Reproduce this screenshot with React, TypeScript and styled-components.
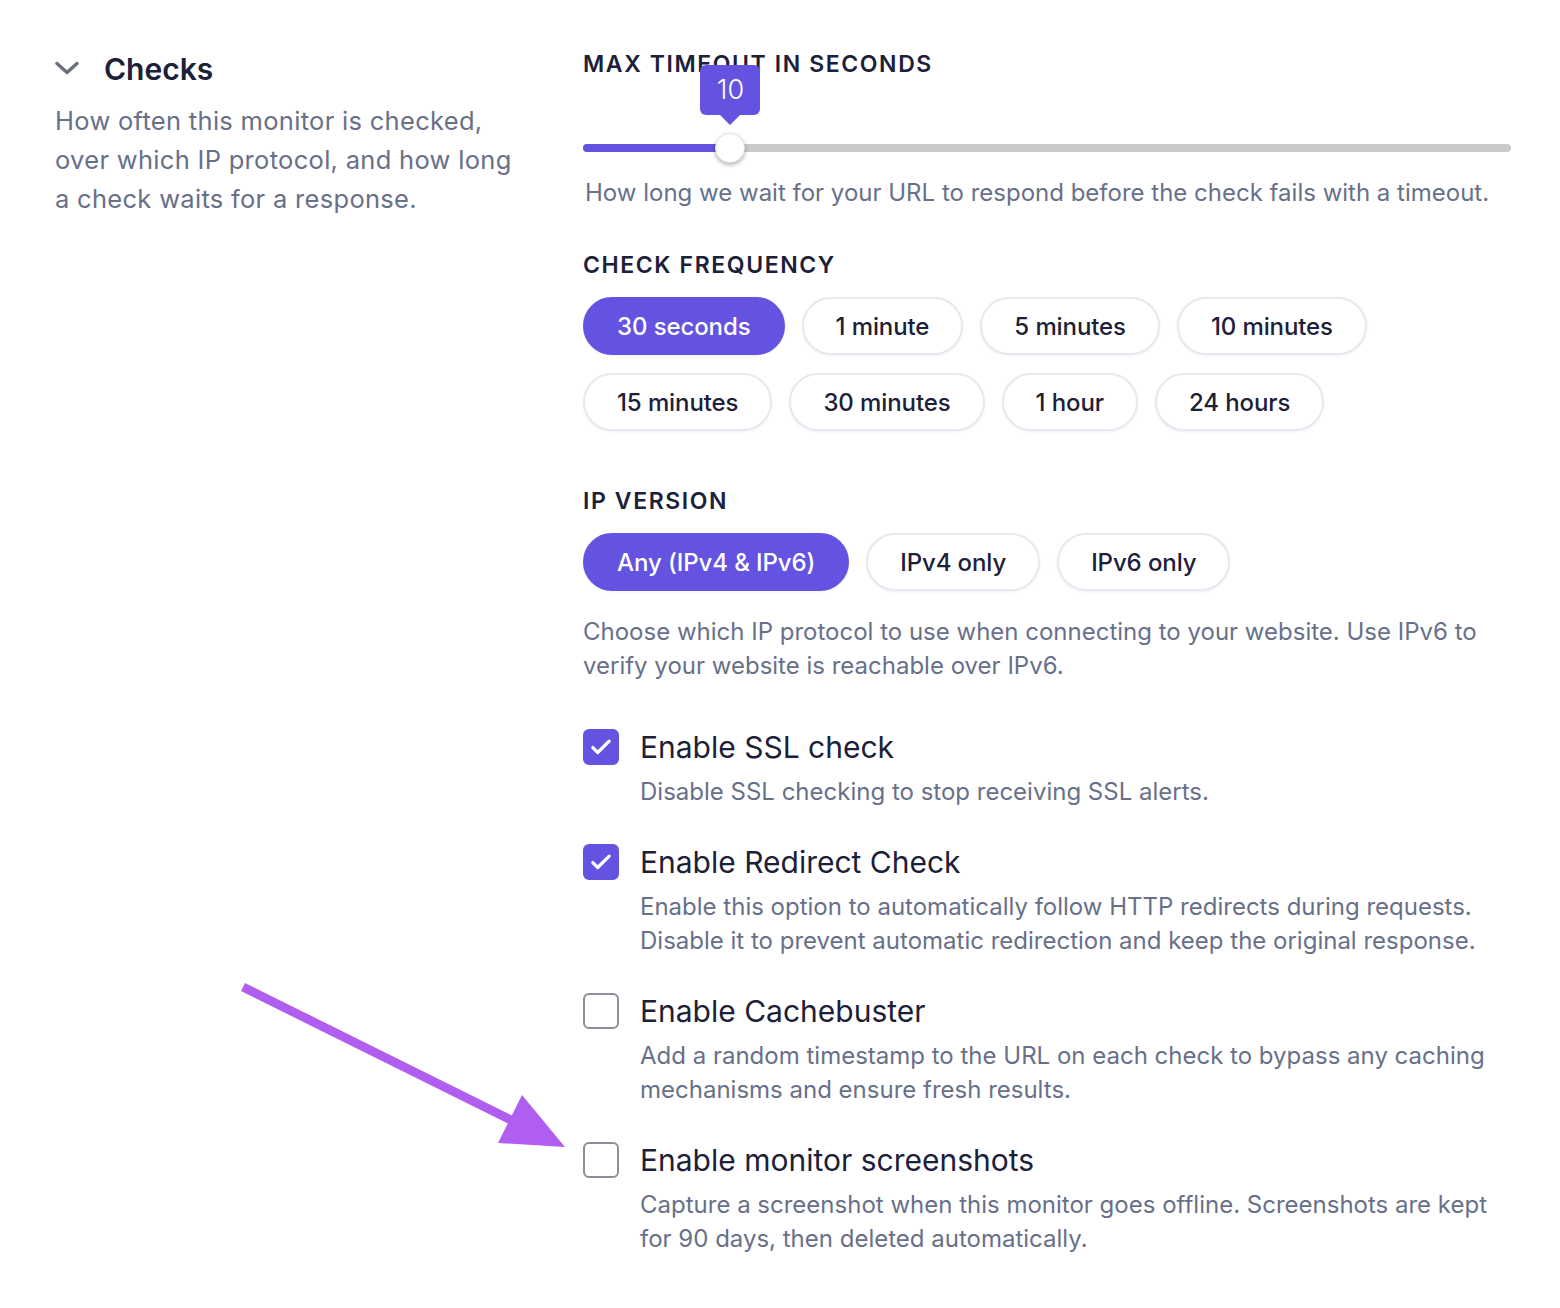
import styled, { createGlobalStyle } from 'styled-components';

const GlobalStyle = createGlobalStyle`
  body {
    margin: 0;
    background: #ffffff;
    font-family: Inter, "Noto Sans", sans-serif;
    color: #1c2039;
  }
  * { box-sizing: border-box; }
`;

const PURPLE = '#6453e0';

const FREQUENCIES = [
  ['30 seconds', '1 minute', '5 minutes', '10 minutes'],
  ['15 minutes', '30 minutes', '1 hour', '24 hours'],
];

const IP_VERSIONS = ['Any (IPv4 & IPv6)', 'IPv4 only', 'IPv6 only'];

const OPTIONS = [
  {
    title: 'Enable SSL check',
    text: ['Disable SSL checking to stop receiving SSL alerts.'],
    checked: true,
  },
  {
    title: 'Enable Redirect Check',
    text: [
      'Enable this option to automatically follow HTTP redirects during requests.',
      'Disable it to prevent automatic redirection and keep the original response.',
    ],
    checked: true,
  },
  {
    title: 'Enable Cachebuster',
    text: [
      'Add a random timestamp to the URL on each check to bypass any caching mechanisms and ensure fresh results.',
    ],
    checked: false,
  },
  {
    title: 'Enable monitor screenshots',
    text: [
      'Capture a screenshot when this monitor goes offline. Screenshots are kept for 90 days, then deleted automatically.',
    ],
    checked: false,
  },
];

function App() {
  const timeout = 10;
  const min = 1;
  const max = 62;
  const pct = (timeout - min) / (max - min);
  const thumbLeft = `calc(15px + ${pct} * (100% - 30px))`;

  return (
    <Page>
      <GlobalStyle />
      <Sidebar>
        <SectionHead>
          <svg width="24" height="24" viewBox="0 0 24 24" fill="none">
            <path
              d="M2 6.5l10 9 10-9"
              stroke="#6b6f78"
              strokeWidth="3.4"
              strokeLinecap="round"
              strokeLinejoin="round"
            />
          </svg>
          <SectionTitle>Checks</SectionTitle>
        </SectionHead>
        <SectionText>
          How often this monitor is checked, over which IP protocol, and how
          long a check waits for a response.
        </SectionText>
      </Sidebar>

      <Form>
        <Label>Max timeout in seconds</Label>
        <Slider>
          <Track />
          <Fill style={{ width: thumbLeft }} />
          <Thumb style={{ left: thumbLeft }}>
            <Bubble>{timeout}</Bubble>
          </Thumb>
        </Slider>
        <Help $top={13} $indent={2}>
          How long we wait for your URL to respond before the check fails with
          a timeout.
        </Help>

        <Label $top={40}>Check frequency</Label>
        <PillGroup>
          {FREQUENCIES.map((row, i) => (
            <PillRow key={i}>
              {row.map((f) => (
                <Pill key={f} $active={f === '30 seconds'}>
                  {f}
                </Pill>
              ))}
            </PillRow>
          ))}
        </PillGroup>

        <Label $top={55}>IP version</Label>
        <PillGroup>
          <PillRow>
            {IP_VERSIONS.map((v) => (
              <Pill key={v} $active={v === IP_VERSIONS[0]}>
                {v}
              </Pill>
            ))}
          </PillRow>
        </PillGroup>
        <Help $top={24}>
          Choose which IP protocol to use when connecting to your website. Use
          IPv6 to verify your website is reachable over IPv6.
        </Help>

        <Options>
          {OPTIONS.map((o) => (
            <Option key={o.title}>
              <Box $checked={o.checked}>
                {o.checked && (
                  <svg width="28" height="28" viewBox="0 0 24 24" fill="none">
                    <path
                      d="M5 12.5l4.2 4.2L19 7"
                      stroke="#fff"
                      strokeWidth="2.8"
                      strokeLinecap="round"
                      strokeLinejoin="round"
                    />
                  </svg>
                )}
              </Box>
              <OptionBody>
                <OptionTitle>{o.title}</OptionTitle>
                {o.text.map((t) => (
                  <OptionText key={t}>{t}</OptionText>
                ))}
              </OptionBody>
            </Option>
          ))}
        </Options>
      </Form>

      <Pointer width="340" height="180" viewBox="0 0 340 180">
        <line
          x1="3"
          y1="3"
          x2="285"
          y2="143"
          stroke="#b05ef0"
          strokeWidth="9"
        />
        <polygon points="325,163 258,159 282,111" fill="#b05ef0" />
      </Pointer>
    </Page>
  );
}
export default App;

const Page = styled.div`
  position: relative;
  display: flex;
  padding: 49px 0 60px 55px;
  min-height: 1308px;
`;

const Sidebar = styled.aside`
  width: 528px;
  flex-shrink: 0;
`;

const SectionHead = styled.div`
  display: flex;
  align-items: center;
  gap: 25px;
  height: 40px;
`;

const SectionTitle = styled.h2`
  margin: 0;
  font-size: 30px;
  font-weight: 600;
  line-height: 40px;
  color: #1c2039;
`;

const SectionText = styled.p`
  margin: 12px 0 0;
  max-width: 462px;
  font-size: 25.5px;
  line-height: 39px;
  letter-spacing: 0.3px;
  color: #687089;
`;

const Form = styled.main`
  width: 928px;
  display: flex;
  flex-direction: column;
`;

const Label = styled.div<{ $top?: number }>`
  margin-top: ${(p) => p.$top ?? 0}px;
  font-size: 23px;
  font-weight: 600;
  line-height: 30px;
  letter-spacing: 1.6px;
  text-transform: uppercase;
  color: #1c2039;
`;

const Slider = styled.div`
  position: relative;
  height: 30px;
  margin-top: 54px;
  display: flex;
  align-items: center;
`;

const Track = styled.div`
  width: 100%;
  height: 8px;
  border-radius: 4px;
  background: #cacaca;
`;

const Fill = styled.div`
  position: absolute;
  left: 0;
  top: 11px;
  height: 8px;
  border-radius: 4px 0 0 4px;
  background: ${PURPLE};
`;

const Thumb = styled.div`
  position: absolute;
  top: 0;
  width: 30px;
  height: 30px;
  margin-left: -15px;
  border-radius: 50%;
  background: #ffffff;
  border: 1px solid #e6e6e6;
  box-shadow: 0 2px 4px rgba(0, 0, 0, 0.3);
`;

const Bubble = styled.div`
  position: absolute;
  left: 50%;
  bottom: 47px;
  transform: translateX(-50%);
  width: 60px;
  height: 50px;
  border-radius: 6px;
  background: ${PURPLE};
  color: #ffffff;
  font-size: 27px;
  font-weight: 300;
  line-height: 50px;
  text-align: center;

  &::after {
    content: '';
    position: absolute;
    left: 50%;
    top: 100%;
    margin-left: -10px;
    border: 10px solid transparent;
    border-bottom: 0;
    border-top-color: ${PURPLE};
  }
`;

const Help = styled.p<{ $top?: number; $indent?: number }>`
  margin: ${(p) => p.$top ?? 0}px 0 0 ${(p) => p.$indent ?? 0}px;
  font-size: 24px;
  line-height: 34px;
  color: #687089;
`;

const PillGroup = styled.div`
  margin-top: 17px;
  display: flex;
  flex-direction: column;
  gap: 18px;
`;

const PillRow = styled.div`
  display: flex;
  gap: 17px;
`;

const Pill = styled.button<{ $active?: boolean }>`
  height: 58px;
  padding: 0 32px;
  border-radius: 29px;
  font-family: inherit;
  font-size: 24px;
  font-weight: 500;
  letter-spacing: -0.1px;
  cursor: pointer;
  border: 2px solid ${(p) => (p.$active ? PURPLE : '#e6e9ef')};
  background: ${(p) => (p.$active ? PURPLE : '#ffffff')};
  color: ${(p) => (p.$active ? '#ffffff' : '#1c2039')};
  box-shadow: 0 1px 3px rgba(20, 30, 60, 0.06);
`;

const Options = styled.div`
  margin-top: 44px;
  display: flex;
  flex-direction: column;
  gap: 33px;
`;

const Option = styled.label`
  display: flex;
  align-items: flex-start;
  gap: 21px;
`;

const Box = styled.span<{ $checked?: boolean }>`
  flex-shrink: 0;
  width: 36px;
  height: 36px;
  margin-top: 2px;
  display: flex;
  align-items: center;
  justify-content: center;
  border-radius: 6px;
  background: ${(p) => (p.$checked ? PURPLE : '#ffffff')};
  border: 2px solid ${(p) => (p.$checked ? PURPLE : '#8b9098')};
`;

const OptionBody = styled.div`
  display: flex;
  flex-direction: column;
`;

const OptionTitle = styled.div`
  font-size: 30px;
  line-height: 40px;
  color: #1c2039;
  margin-bottom: 8px;
`;

const OptionText = styled.div`
  font-size: 24px;
  line-height: 34px;
  color: #687089;
`;

const Pointer = styled.svg`
  position: absolute;
  left: 240px;
  top: 984px;
  overflow: visible;
`;
